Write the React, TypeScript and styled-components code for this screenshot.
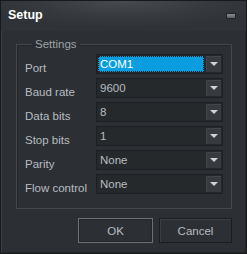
import React from 'react';
import styled, { createGlobalStyle } from 'styled-components';

const GlobalStyle = createGlobalStyle`
  html, body {
    margin: 0;
    padding: 0;
    background: #2c3034;
  }
  * {
    box-sizing: border-box;
  }
`;

const Window = styled.div`
  width: 247px;
  height: 254px;
  display: flex;
  flex-direction: column;
  background: #2c3034;
  border: 1px solid #18191b;
  box-shadow: inset 1px 1px 0 #3e4246, inset -1px -1px 0 #232629;
  font-family: 'Liberation Sans', Arial, sans-serif;
`;

const TitleBar = styled.div`
  height: 30px;
  flex: none;
  display: flex;
  align-items: center;
  justify-content: space-between;
  padding: 0 10px 2px 7px;
  background: radial-gradient(ellipse 60% 90% at 50% 0%, #474b4f 0%, #363a3e 60%, #2f3337 100%);
`;

const Title = styled.span`
  font-size: 12.5px;
  font-weight: 700;
  color: #ffffff;
`;

const CloseButton = styled.span`
  width: 10px;
  height: 6px;
  margin-top: 1px;
  border: 1px solid #202225;
  background: linear-gradient(#8a8e92, #5a5e62);
  border-radius: 1px;
`;

const Body = styled.div`
  flex: 1;
  display: flex;
  flex-direction: column;
  padding: 7px 14px 14px 15px;
`;

const GroupBox = styled.fieldset`
  margin: 0;
  padding: 4px 8px 14px 8px;
  border: 1px solid #44484c;
  box-shadow: inset 1px 1px 0 #24272a;
  display: grid;
  grid-template-columns: 71px 1fr;
  row-gap: 4px;
  align-items: center;
`;

const Legend = styled.legend`
  margin-left: 7px;
  padding: 0 3px;
  font-size: 11.5px;
  color: #9ea2a6;
`;

const Label = styled.span`
  font-size: 11.5px;
  color: #b8bcc0;
  padding-top: 7px;
`;

const Combo = styled.div`
  height: 20px;
  display: flex;
  align-items: stretch;
  background: #25292c;
  border: 1px solid #1d1f22;
  padding: 1px;
`;

const Field = styled.div<{ $selected?: boolean }>`
  flex: 1;
  display: flex;
  align-items: center;
  padding-left: 2px;
  font-size: 11.5px;
  color: ${(p) => (p.$selected ? '#ffffff' : '#b8bcc0')};
  background: ${(p) => (p.$selected ? '#0a9de0' : 'transparent')};
  outline: ${(p) => (p.$selected ? '1px dotted #2a1a18' : 'none')};
  outline-offset: -1px;
  margin: 0 2px 0 0;
`;

const DropButton = styled.div`
  width: 15px;
  flex: none;
  display: flex;
  align-items: center;
  justify-content: center;
  background: #373b3f;
  box-shadow: inset 1px 1px 0 #42464a;
`;

const Arrow = styled.span`
  width: 0;
  height: 0;
  border-left: 4px solid transparent;
  border-right: 4px solid transparent;
  border-top: 4px solid #d0d3d6;
`;

const ButtonRow = styled.div`
  display: flex;
  justify-content: flex-end;
  gap: 6px;
  margin-top: 9px;
`;

const Button = styled.div<{ $default?: boolean }>`
  width: ${(p) => (p.$default ? 75 : 73)}px;
  height: 25px;
  display: flex;
  align-items: center;
  justify-content: center;
  font-size: 11.5px;
  color: #b8bcc0;
  background: #2c3034;
  border: 1px solid ${(p) => (p.$default ? '#6c7074' : '#1a1c1e')};
  box-shadow: ${(p) =>
    p.$default ? 'inset 0 0 0 1px #24272a' : 'inset 1px 1px 0 #3c4044'};
`;

const rows: { label: string; value: string; selected?: boolean }[] = [
  { label: 'Port', value: 'COM1', selected: true },
  { label: 'Baud rate', value: '9600' },
  { label: 'Data bits', value: '8' },
  { label: 'Stop bits', value: '1' },
  { label: 'Parity', value: 'None' },
  { label: 'Flow control', value: 'None' },
];

export default function App() {
  return (
    <>
      <GlobalStyle />
      <Window>
        <TitleBar>
          <Title>Setup</Title>
          <CloseButton />
        </TitleBar>
        <Body>
          <GroupBox>
            <Legend>Settings</Legend>
            {rows.map((r) => (
              <React.Fragment key={r.label}>
                <Label>{r.label}</Label>
                <Combo>
                  <Field $selected={r.selected}>{r.value}</Field>
                  <DropButton>
                    <Arrow />
                  </DropButton>
                </Combo>
              </React.Fragment>
            ))}
          </GroupBox>
          <ButtonRow>
            <Button $default>OK</Button>
            <Button>Cancel</Button>
          </ButtonRow>
        </Body>
      </Window>
    </>
  );
}
